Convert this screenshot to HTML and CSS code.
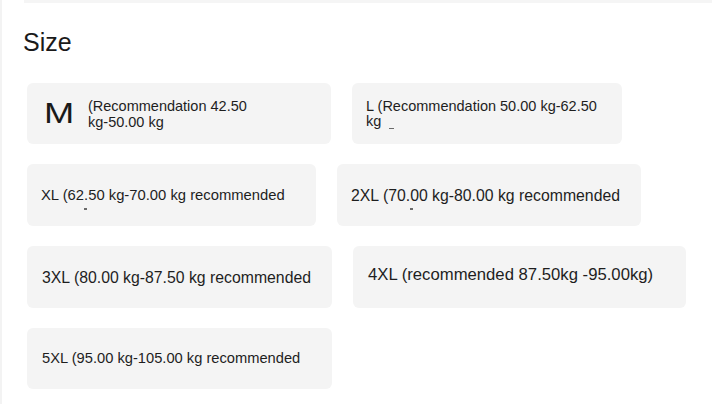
FILE: index.html
```html
<!DOCTYPE html>
<html lang="en">
<head>
<meta charset="utf-8">
<title>Size</title>
<link rel="stylesheet" href="styles.css">
</head>
<body>
<div class="page">
  <div class="top-rule"></div>
  <h2 class="title">Size</h2>
  <div class="sizes">
    <div class="card card-m">
      <span class="big">M</span>
      <span class="wrap-text">(Recommendation 42.50 <span class="nobr">kg-50.00</span> kg</span>
    </div>
    <div class="card card-l">
      <span class="wrap-text">L (Recommendation 50.00 <span class="nobr">kg-62.50</span> kg<span class="tick tick-inline"></span></span>
    </div>
    <div class="card card-xl">
      <div class="line-block">
        <div class="line">XL (62.50 kg-70.00 kg recommended</div>
        <div class="tick tick-xl"></div>
      </div>
    </div>
    <div class="card card-2xl">
      <div class="line-block">
        <div class="line">2XL (70.00 kg-80.00 kg recommended</div>
        <div class="tick tick-2xl"></div>
      </div>
    </div>
    <div class="card card-3xl">
      <div class="line">3XL (80.00 kg-87.50 kg recommended</div>
    </div>
    <div class="card card-4xl">
      <div class="line">4XL (recommended 87.50kg -95.00kg)</div>
    </div>
    <div class="card card-5xl">
      <div class="line">5XL (95.00 kg-105.00 kg recommended</div>
    </div>
  </div>
</div>
</body>
</html>
```

FILE: styles.css
```css
* { box-sizing: border-box; }

html, body {
  margin: 0;
  padding: 0;
  background: #ffffff;
}

body {
  font-family: "Liberation Sans", Arial, sans-serif;
  color: #1e1e1e;
}

.page {
  min-height: 404px;
  border-left: 2px solid #f3f3f3;
}

.top-rule {
  margin-left: 22px;
  height: 3px;
  background: #f5f5f5;
}

.title {
  margin: 27px 0 28px 21px;
  font-size: 25px;
  line-height: 25px;
  font-weight: normal;
  color: #1a1a1a;
}

.sizes {
  display: flex;
  flex-wrap: wrap;
  gap: 20px 21px;
  padding-left: 25px;
  padding-right: 16px;
}

.card {
  display: flex;
  align-items: center;
  height: 62px;
  background: #f4f4f4;
  border-radius: 6px;
  padding-left: 14px;
}

.card-m { width: 304px; height: 61px; padding-left: 17px; }
.card-l { width: 270px; height: 61px; padding-left: 14px; }
.card-xl { width: 289px; }
.card-2xl { width: 304px; }
.card-3xl { width: 305px; padding-left: 15px; }
.card-4xl { width: 333px; padding-left: 15px; padding-bottom: 5px; }
.card-5xl { width: 305px; height: 61px; padding-left: 15px; }

.big {
  display: inline-block;
  width: 44px;
  font-size: 29px;
  line-height: 29px;
  transform: scaleX(1.25);
  transform-origin: left center;
  color: #1a1a1a;
}

.wrap-text {
  font-size: 14.5px;
  line-height: 16px;
}

.nobr { white-space: nowrap; }

.card-m .wrap-text { width: 178px; }
.card-l .wrap-text { width: 240px; line-height: 15px; }

.line {
  white-space: nowrap;
  line-height: 17px;
}

.card-xl .line { font-size: 14.8px; }
.card-2xl .line { font-size: 15.8px; }
.card-3xl .line { font-size: 15.8px; }
.card-4xl .line { font-size: 16.7px; }
.card-5xl .line { font-size: 14.7px; }

.tick {
  height: 2px;
  width: 3px;
  background: #6a6a6a;
}

.tick-inline {
  display: inline-block;
  width: 5px;
  height: 1px;
  margin-left: 8px;
  vertical-align: -3px;
}

.tick-xl { margin: 4px 0 -6px 43px; }
.tick-2xl { margin: 4px 0 -6px 59px; }
```
